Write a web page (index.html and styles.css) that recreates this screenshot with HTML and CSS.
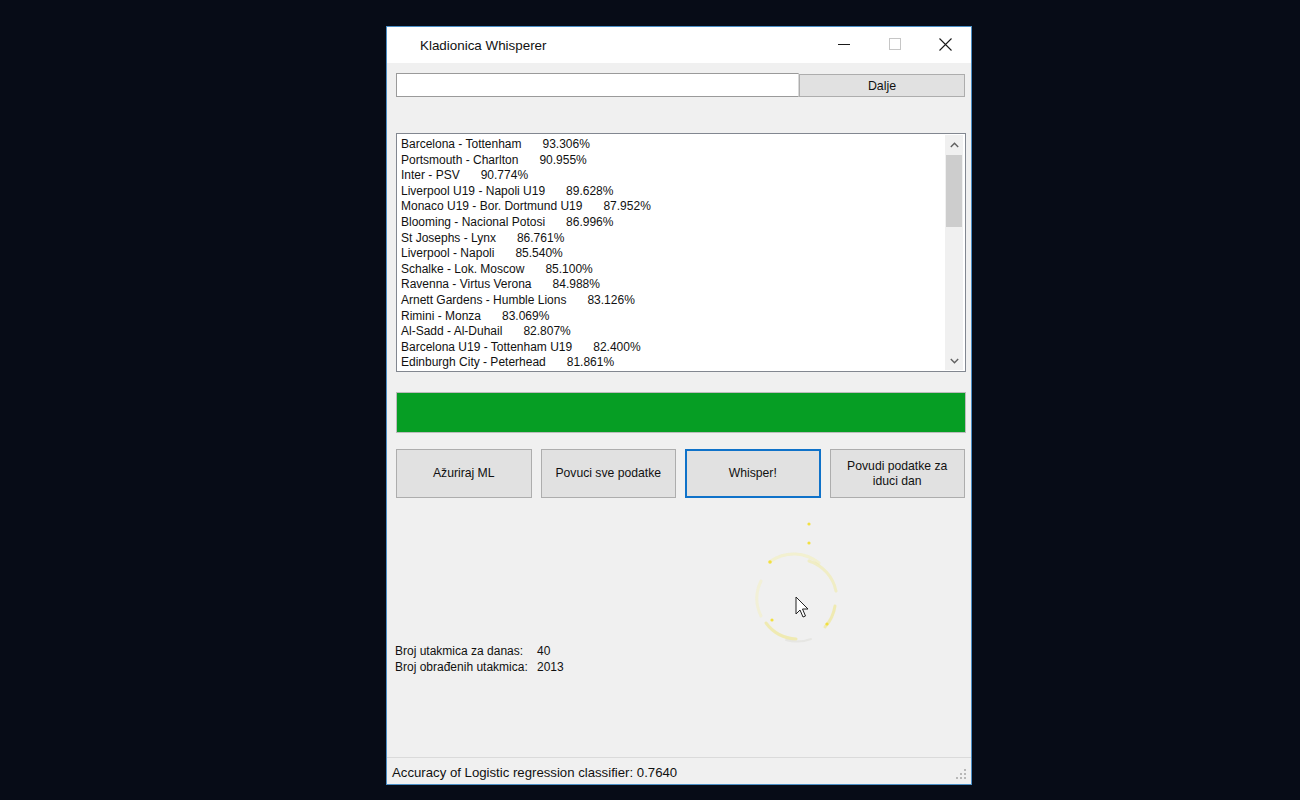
FILE: index.html
```html
<!DOCTYPE html>
<html>
<head>
<meta charset="utf-8">
<title>Kladionica Whisperer</title>
<link rel="stylesheet" href="styles.css">
</head>
<body>
<div class="window">
  <div class="titlebar">
    <span class="title">Kladionica Whisperer</span>
    <div class="controls">
      <div class="ctl"><svg width="12" height="12" viewBox="0 0 12 12"><line x1="0" y1="6.5" x2="12" y2="6.5" stroke="#1a1a1a" stroke-width="1"/></svg></div>
      <div class="ctl"><svg width="12" height="12" viewBox="0 0 12 12"><rect x="0.5" y="0.5" width="11" height="11" fill="none" stroke="#c6c6c6" stroke-width="1"/></svg></div>
      <div class="ctl"><svg width="13" height="13" viewBox="0 0 13 13"><path d="M0.5 0.5 L12.5 12.5 M12.5 0.5 L0.5 12.5" stroke="#1a1a1a" stroke-width="1.1" fill="none"/></svg></div>
    </div>
  </div>
  <div class="client">
    <div class="input-row">
      <div class="textbox"></div>
      <div class="btn dalje">Dalje</div>
    </div>
    <div class="listbox">
      <ul class="items">
        <li>Barcelona - Tottenham<span class="pct">93.306%</span></li>
        <li>Portsmouth - Charlton<span class="pct">90.955%</span></li>
        <li>Inter - PSV<span class="pct">90.774%</span></li>
        <li>Liverpool U19 - Napoli U19<span class="pct">89.628%</span></li>
        <li>Monaco U19 - Bor. Dortmund U19<span class="pct">87.952%</span></li>
        <li>Blooming - Nacional Potosi<span class="pct">86.996%</span></li>
        <li>St Josephs - Lynx<span class="pct">86.761%</span></li>
        <li>Liverpool - Napoli<span class="pct">85.540%</span></li>
        <li>Schalke - Lok. Moscow<span class="pct">85.100%</span></li>
        <li>Ravenna - Virtus Verona<span class="pct">84.988%</span></li>
        <li>Arnett Gardens - Humble Lions<span class="pct">83.126%</span></li>
        <li>Rimini - Monza<span class="pct">83.069%</span></li>
        <li>Al-Sadd - Al-Duhail<span class="pct">82.807%</span></li>
        <li>Barcelona U19 - Tottenham U19<span class="pct">82.400%</span></li>
        <li>Edinburgh City - Peterhead<span class="pct">81.861%</span></li>
      </ul>
      <div class="scrollbar">
        <div class="arrow"><svg width="9" height="6" viewBox="0 0 9 6"><path d="M0.8 5 L4.5 1.3 L8.2 5" stroke="#606060" stroke-width="1.4" fill="none"/></svg></div>
        <div class="track"><div class="thumb"></div></div>
        <div class="arrow"><svg width="9" height="6" viewBox="0 0 9 6"><path d="M0.8 1 L4.5 4.7 L8.2 1" stroke="#606060" stroke-width="1.4" fill="none"/></svg></div>
      </div>
    </div>
    <div class="progress"><div class="fill" style="width:100%"></div></div>
    <div class="buttons">
      <div class="btn big">Ažuriraj ML</div>
      <div class="btn big">Povuci sve podatke</div>
      <div class="btn big focused">Whisper!</div>
      <div class="btn big">Povudi podatke za<br>iduci dan</div>
    </div>
    <div class="stats">
      <span>Broj utakmica za danas:</span><span>40</span>
      <span>Broj obrađenih utakmica:</span><span>2013</span>
    </div>
  </div>
  <div class="statusbar">
    <span class="status-text">Accuracy of Logistic regression classifier: 0.7640</span>
    <svg class="grip" width="11" height="11" viewBox="0 0 11 11">
      <rect x="8" y="0" width="2" height="2" fill="#b8b8b8"/>
      <rect x="4" y="4" width="2" height="2" fill="#b8b8b8"/>
      <rect x="8" y="4" width="2" height="2" fill="#b8b8b8"/>
      <rect x="0" y="8" width="2" height="2" fill="#b8b8b8"/>
      <rect x="4" y="8" width="2" height="2" fill="#b8b8b8"/>
      <rect x="8" y="8" width="2" height="2" fill="#b8b8b8"/>
    </svg>
  </div>
  <svg class="busy" width="120" height="140" viewBox="0 0 120 140">
    <g fill="none" stroke-linecap="round">
      <path d="M30 50 A40 40 0 0 1 78 52" stroke="#f3efb0" stroke-width="3" opacity="0.5"/>
      <path d="M68 50 A40 40 0 0 1 95 80" stroke="#f0e890" stroke-width="3" opacity="0.45"/>
      <path d="M20 70 A40 40 0 0 0 20 105" stroke="#f4f0b8" stroke-width="3" opacity="0.45"/>
      <path d="M25 112 A40 40 0 0 0 55 128" stroke="#efe680" stroke-width="3" opacity="0.55"/>
      <path d="M94 95 A40 40 0 0 1 84 116" stroke="#efe680" stroke-width="3" opacity="0.55"/>
      <path d="M45 129 A40 40 0 0 0 70 128" stroke="#d8d8d0" stroke-width="2" opacity="0.4"/>
    </g>
    <g fill="#f2e040">
      <circle cx="68" cy="13" r="1.6"/>
      <circle cx="68" cy="32" r="1.6"/>
      <circle cx="29" cy="51" r="1.8"/>
      <circle cx="31" cy="109" r="1.6"/>
      <circle cx="86" cy="113" r="1.6"/>
    </g>
  </svg>
  <svg class="cursor" width="14" height="23" viewBox="0 0 14 23">
    <path d="M1 1 L1 18 L5 14 L8 21 L10.5 20 L7.5 13 L13 13 Z" fill="#fff" stroke="#222" stroke-width="1" stroke-linejoin="round"/>
  </svg>
</div>
</body>
</html>
```

FILE: styles.css
```css
* { box-sizing: border-box; }
html, body { margin: 0; padding: 0; }
body {
  background: #070c17;
  width: 1300px;
  height: 800px;
  overflow: hidden;
  font-family: "Liberation Sans", Arial, sans-serif;
  color: #111;
}
.window {
  position: relative;
  margin: 26px 0 0 386px;
  width: 586px;
  height: 759px;
  border: 1px solid #4b8fc6;
  background: #f0f0f0;
  display: flex;
  flex-direction: column;
}
.titlebar {
  height: 36px;
  background: #fff;
  display: flex;
  align-items: center;
  flex: none;
}
.title {
  margin-left: 33px;
  font-size: 13.4px;
  color: #111;
  padding-top: 1px;
}
.controls {
  margin-left: auto;
  display: flex;
  height: 100%;
}
.ctl {
  width: 51px;
  height: 100%;
  display: flex;
  align-items: center;
  justify-content: center;
  padding-bottom: 2px;
}
.client {
  flex: 1;
  padding: 10px 6px 0 9px;
  display: flex;
  flex-direction: column;
}
.input-row {
  display: flex;
  height: 23px;
}
.textbox {
  width: 403px;
  height: 24px;
  background: #fff;
  border: 1px solid #9a9a9a;
  border-right-color: #d8d8d8;
}
.btn {
  background: #e1e1e1;
  border: 1px solid #adadad;
  font-size: 12px;
  color: #111;
  display: flex;
  align-items: center;
  justify-content: center;
  text-align: center;
}
.dalje {
  flex: 1;
  margin-top: 1px;
  height: 23px;
  padding-top: 1px;
  font-size: 12.4px;
}
.listbox {
  margin-top: 37px;
  height: 239px;
  width: 570px;
  background: #fff;
  border: 1px solid #828790;
  padding: 1px;
  display: flex;
}
.items {
  list-style: none;
  margin: 0;
  padding: 2px 0 0 3px;
  flex: 1;
  font-size: 12px;
  line-height: 15.6px;
  overflow: hidden;
  white-space: nowrap;
}
.pct { margin-left: 21px; }
.scrollbar {
  width: 18px;
  margin-right: 1px;
  background: #f0f0f0;
  display: flex;
  flex-direction: column;
}
.arrow {
  height: 19px;
  display: flex;
  align-items: center;
  justify-content: center;
  flex: none;
}
.track { flex: 1; }
.thumb {
  height: 72px;
  margin: 1px 1px 0 1px;
  background: #cdcdcd;
}
.progress {
  margin-top: 20px;
  height: 41px;
  width: 570px;
  border: 1px solid #bcbcbc;
  background: #e6e6e6;
  padding: 0;
}
.fill {
  height: 100%;
  background: #069e24;
}
.buttons {
  margin-top: 16px;
  width: 569px;
  display: grid;
  grid-template-columns: repeat(4, 1fr);
  gap: 9px;
}
.big {
  height: 49px;
  line-height: 15px;
  font-size: 12.2px;
}
.focused {
  border: 2px solid #0f72c9;
}
.stats {
  margin-top: 146px;
  margin-left: -1px;
  display: grid;
  grid-template-columns: 142px auto;
  font-size: 12px;
  line-height: 15.5px;
  width: 200px;
}
.statusbar {
  flex: none;
  height: 27px;
  border-top: 1px solid #dadada;
  display: flex;
  align-items: center;
  padding-left: 5px;
  position: relative;
}
.status-text {
  font-size: 13.2px;
  color: #111;
  padding-top: 2px;
}
.grip {
  position: absolute;
  right: 4px;
  bottom: 4px;
}
.busy {
  position: absolute;
  left: 354px;
  top: 484px;
}
.cursor {
  position: absolute;
  left: 408px;
  top: 569px;
}
```
